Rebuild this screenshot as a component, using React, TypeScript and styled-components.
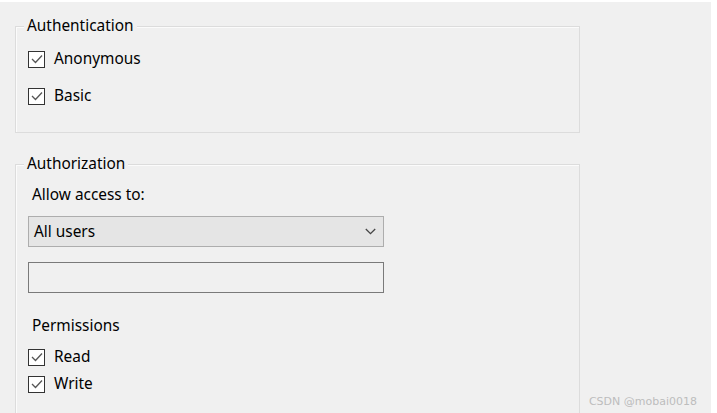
import * as React from 'react';
import styled, { createGlobalStyle } from 'styled-components';

const GlobalStyle = createGlobalStyle`
  html, body {
    margin: 0;
    padding: 0;
    background: #ffffff;
  }
  body {
    font-family: "Noto Sans", "Open Sans", sans-serif;
    color: #000;
  }
`;

const checkIcon = (
  <svg width="12" height="10" viewBox="0 0 12 10" fill="none">
    <path d="M1 5L4.5 8.5L11 1.5" stroke="#555" strokeWidth="1.3" />
  </svg>
);

const chevronIcon = (
  <svg width="11" height="7" viewBox="0 0 11 7" fill="none">
    <path d="M0.8 1L5.5 5.6L10.2 1" stroke="#444" strokeWidth="1.3" />
  </svg>
);

interface checkInterface {
  label: string;
  spacing: number;
}

const CheckRow = ({ label, spacing }: checkInterface) => (
  <Check $spacing={spacing}>
    <Box>{checkIcon}</Box>
    <span>{label}</span>
  </Check>
);

export default function App() {
  return (
    <>
      <GlobalStyle />
      <Page>
        <Panel>
          <Group $height={107}>
            <Legend>Authentication</Legend>
            <Body $top={22}>
              <CheckRow label="Anonymous" spacing={0} />
              <CheckRow label="Basic" spacing={17} />
            </Body>
          </Group>
          <Group $height={260} $top={31}>
            <Legend>Authorization</Legend>
            <Body $top={20}>
              <Label>Allow access to:</Label>
              <Select>
                <span>All users</span>
                {chevronIcon}
              </Select>
              <TextBox />
              <Label $top={23}>Permissions</Label>
              <CheckRow label="Read" spacing={11} />
              <CheckRow label="Write" spacing={7} />
            </Body>
          </Group>
        </Panel>
        <Watermark>CSDN @mobai0018</Watermark>
      </Page>
    </>
  );
}

const Page = styled.div`
  position: relative;
  width: 711px;
  height: 411px;
  margin-top: 2px;
  background: #f0f0f0;
  overflow: hidden;
`;

const Panel = styled.div`
  display: flex;
  flex-direction: column;
  padding: 24px 0 0 15px;
  width: 565px;
`;

const Group = styled.div<{ $height: number; $top?: number }>`
  position: relative;
  box-sizing: border-box;
  height: ${(p) => p.$height}px;
  margin-top: ${(p) => p.$top || 0}px;
  border: 1px solid #dcdcdc;
  box-shadow: inset 1px 1px 0 #fbfbfb;
`;

const Legend = styled.div`
  position: absolute;
  top: -11px;
  left: 8px;
  padding: 0 3px;
  background: #f0f0f0;
  font-size: 15.4px;
  line-height: 20px;
  color: #000;
`;

const Body = styled.div<{ $top: number }>`
  display: flex;
  flex-direction: column;
  align-items: flex-start;
  padding: ${(p) => p.$top}px 0 0 12px;
`;

const Check = styled.div<{ $spacing: number }>`
  display: flex;
  align-items: center;
  gap: 9px;
  margin-top: ${(p) => p.$spacing}px;
  font-size: 15.4px;
  line-height: 20px;
  color: #000;
`;

const Box = styled.div`
  box-sizing: border-box;
  width: 17px;
  height: 17px;
  border: 1px solid #333333;
  background: #ffffff;
  display: flex;
  align-items: center;
  justify-content: center;
`;

const Label = styled.div<{ $top?: number }>`
  margin-top: ${(p) => p.$top || 0}px;
  padding-left: 4px;
  font-size: 15.4px;
  line-height: 20px;
  color: #000;
`;

const Select = styled.div`
  box-sizing: border-box;
  display: flex;
  align-items: center;
  justify-content: space-between;
  width: 356px;
  height: 31px;
  margin-top: 11px;
  padding: 0 7px 0 5px;
  background: #e5e5e5;
  border: 1px solid #adadad;
  font-size: 15.4px;
  color: #000;
`;

const TextBox = styled.div`
  box-sizing: border-box;
  width: 356px;
  height: 31px;
  margin-top: 15px;
  background: #f0f0f0;
  border: 1px solid #7a7a7a;
`;

const Watermark = styled.div`
  position: absolute;
  right: 14px;
  bottom: 5px;
  font-family: "DejaVu Sans", sans-serif;
  font-size: 11px;
  color: #bdbdbd;
`;
